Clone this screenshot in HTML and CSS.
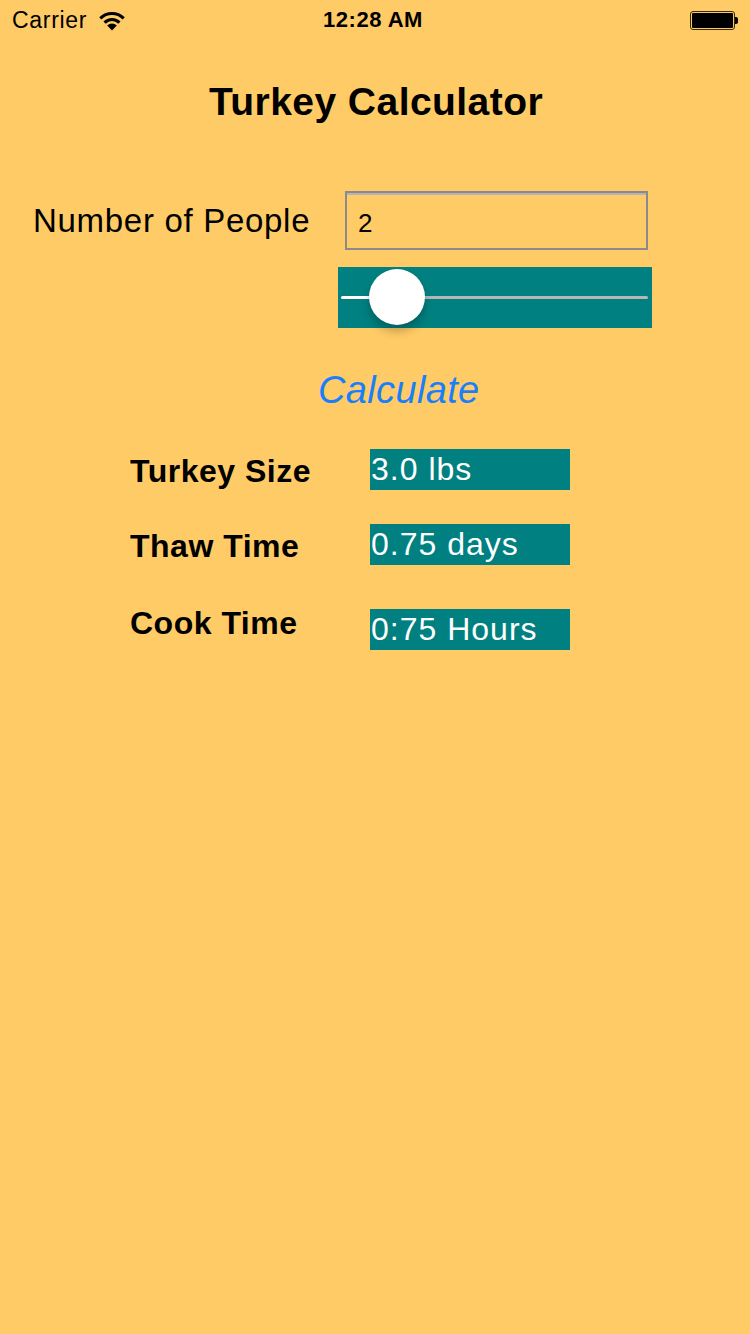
FILE: index.html
```html
<!DOCTYPE html>
<html>
<head>
<meta charset="utf-8">
<title>Turkey Calculator</title>
<link rel="stylesheet" href="styles.css">
</head>
<body>
<div class="screen">
  <div class="status-bar">
    <div class="status-left">
      <span class="carrier">Carrier</span>
      <svg class="wifi" width="26" height="20" viewBox="0 0 26 20">
        <path d="M1.33 7.33 A16.5 16.5 0 0 1 24.67 7.33" fill="none" stroke="#000" stroke-width="3.2"/>
        <path d="M5.58 11.58 A10.5 10.5 0 0 1 20.42 11.58" fill="none" stroke="#000" stroke-width="3.2"/>
        <path d="M13 19.5 L8.2 14.6 A6.8 6.8 0 0 1 17.8 14.6 Z" fill="#000"/>
      </svg>
    </div>
    <div class="status-time">12:28 AM</div>
    <div class="status-right">
      <div class="battery"><div class="battery-fill"></div></div>
      <div class="battery-nub"></div>
    </div>
  </div>

  <h1 class="title">Turkey Calculator</h1>

  <div class="people-row">
    <label class="people-label" for="people">Number of People</label>
    <input class="people-input" id="people" type="text" value="2">
  </div>

  <div class="slider">
    <div class="slider-track">
      <div class="slider-fill"></div>
      <div class="slider-rest"></div>
    </div>
    <div class="slider-thumb"></div>
  </div>

  <div class="calc-row">
    <span class="calc-button">Calculate</span>
  </div>

  <div class="results">
    <div class="result-row">
      <div class="result-label">Turkey Size</div>
      <div class="result-value">3.0 lbs</div>
    </div>
    <div class="result-row result-row--second">
      <div class="result-label">Thaw Time</div>
      <div class="result-value">0.75 days</div>
    </div>
    <div class="result-row result-row--third">
      <div class="result-label result-label--raised">Cook Time</div>
      <div class="result-value">0:75 Hours</div>
    </div>
  </div>
</div>
</body>
</html>
```

FILE: styles.css
```css
html, body {
  margin: 0;
  padding: 0;
}

body {
  background: #ffcb66;
  font-family: "Liberation Sans", Arial, sans-serif;
  color: #000;
}

.screen {
  width: 750px;
  min-height: 1334px;
  display: flex;
  flex-direction: column;
}

/* Status bar */
.status-bar {
  height: 40px;
  display: flex;
  align-items: center;
  justify-content: space-between;
  padding: 0 12px;
}

.status-left {
  display: flex;
  align-items: center;
  gap: 12px;
  width: 200px;
}

.carrier {
  font-size: 23px;
  line-height: 40px;
  letter-spacing: 0.7px;
}

.wifi {
  display: block;
  margin-top: 1px;
}

.status-time {
  font-size: 22px;
  font-weight: bold;
  line-height: 40px;
  letter-spacing: 0.5px;
  margin-left: -4px;
}

.status-right {
  width: 200px;
  display: flex;
  justify-content: flex-end;
  align-items: center;
}

.battery {
  width: 45px;
  height: 19px;
  box-sizing: border-box;
  border: 1px solid #3a2a00;
  border-radius: 3px;
  padding: 1px;
  margin-top: 1px;
}

.battery-fill {
  width: 100%;
  height: 100%;
  background: #000;
  border-radius: 1px;
}

.battery-nub {
  width: 3px;
  height: 7px;
  background: #000;
  border-radius: 0 2px 2px 0;
  margin-top: 1px;
}

/* Title */
.title {
  margin: 40px 0 0;
  font-size: 39px;
  line-height: 44px;
  font-weight: bold;
  text-align: center;
  letter-spacing: 0.45px;
  padding-left: 2px;
}

/* Number of people */
.people-row {
  margin-top: 67px;
  display: flex;
  align-items: center;
  padding-left: 33px;
}

.people-label {
  font-size: 33px;
  line-height: 59px;
  width: 312px;
  letter-spacing: 0.7px;
}

.people-input {
  width: 303px;
  height: 59px;
  box-sizing: border-box;
  border: 2px solid #8a8a8a;
  box-shadow: inset 0 2px 0 #b4b4b4;
  background: transparent;
  padding: 6px 0 0 11px;
  margin: 0;
  font-family: "Liberation Sans", Arial, sans-serif;
  font-size: 26px;
  color: #000;
  outline: none;
  border-radius: 0;
}

/* Slider */
.slider {
  margin: 17px 0 0 338px;
  width: 314px;
  height: 61px;
  background: #008080;
  position: relative;
  display: flex;
  align-items: center;
  padding: 0 4px 0 3px;
  box-sizing: border-box;
}

.slider-track {
  flex: 1;
  height: 3px;
  display: flex;
}

.slider-fill {
  width: 56px;
  height: 3px;
  background: #fff;
  border-radius: 2px 0 0 2px;
}

.slider-rest {
  flex: 1;
  height: 3px;
  background: #b6b6b6;
  border-radius: 0 2px 2px 0;
}

.slider-thumb {
  position: absolute;
  left: 31px;
  top: 2px;
  width: 56px;
  height: 56px;
  border-radius: 50%;
  background: #fff;
  box-shadow: 0 7px 9px rgba(0, 0, 0, 0.22), 0 0 1px rgba(0, 0, 0, 0.25);
}

/* Calculate */
.calc-row {
  margin-top: 39px;
  padding-left: 318px;
}

.calc-button {
  display: inline-block;
  font-size: 38px;
  line-height: 46px;
  font-style: italic;
  color: #1a7ffb;
  letter-spacing: 0.35px;
}

/* Results */
.results {
  margin-top: 36px;
  display: flex;
  flex-direction: column;
}

.result-row {
  display: flex;
  align-items: flex-start;
  padding-left: 130px;
}

.result-row--second {
  margin-top: 32px;
}

.result-row--third {
  margin-top: 42px;
}

.result-label {
  width: 240px;
  font-size: 32px;
  font-weight: bold;
  line-height: 41px;
  margin-top: 2px;
  letter-spacing: 0.5px;
}

.result-label--raised {
  margin-top: -6px;
}

.result-value {
  width: 200px;
  height: 41px;
  background: #008080;
  color: #fff;
  font-size: 32px;
  line-height: 41px;
  padding-left: 1px;
  box-sizing: border-box;
  white-space: nowrap;
  letter-spacing: 1px;
}
```
